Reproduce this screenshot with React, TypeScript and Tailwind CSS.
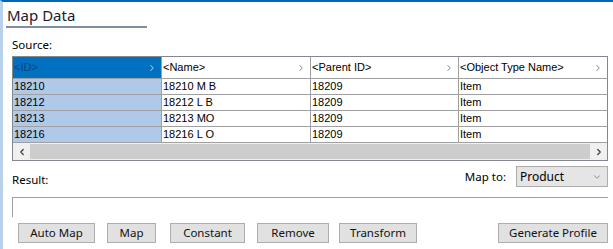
import { ChevronDown, ChevronLeft, ChevronRight } from "lucide-react";

const COLS = [
    { label: "<ID>", w: "w-[148px]" },
    { label: "<Name>", w: "w-[149px]" },
    { label: "<Parent ID>", w: "w-[148px]" },
    { label: "<Object Type Name>", w: "w-[149px]" },
];

const ROWS = [
    ["18210", "18210 M B", "18209", "Item"],
    ["18212", "18212 L B", "18209", "Item"],
    ["18213", "18213 MO", "18209", "Item"],
    ["18216", "18216 L O", "18209", "Item"],
];

const BUTTONS = [
    { label: "Auto Map", cls: "ml-[15px] w-[77px]" },
    { label: "Map", cls: "ml-[12px] w-[49px]" },
    { label: "Constant", cls: "ml-[14px] w-[75px]" },
    { label: "Remove", cls: "ml-[12px] w-[72px]" },
    { label: "Transform", cls: "ml-[10px] w-[78px]" },
];

function Btn({ label, className }: { label: string; className?: string }) {
    return (
        <button
            className={`h-[20px] border border-[#adadad] bg-[#e1e1e1] text-[11.5px] leading-none text-[#111] ${className ?? ""}`}
        >
            {label}
        </button>
    );
}

export default function App() {
    return (
        <div
            className="relative h-[249px] w-[613px] overflow-hidden border-t-2 border-l-[3px] border-t-[#0068b8] border-l-[#b9d1ea] bg-white text-black"
            style={{ fontFamily: '"Noto Sans", "Open Sans", sans-serif' }}
        >
            <div className="ml-[3px] flex h-[26px] w-[141px] items-end border-b-2 border-[#7f8ea3] pb-[3px] pl-[1px]">
                <span className="text-[15px] leading-none text-[#1a1a2e]">Map Data</span>
            </div>

            <div className="ml-[9px] mt-[10px] text-[11.5px] leading-[14px]">Source:</div>

            <div className="ml-[9px] mt-[4px] w-[596px] border border-[#828790]">
                <div
                    className="flex h-[22px]"
                    style={{ fontFamily: '"Liberation Sans", Arial, sans-serif' }}
                >
                    {COLS.map((c, i) => (
                        <div
                            key={c.label}
                            className={`${c.w} flex items-center justify-between border-b border-[#a0a0a0] pl-[1px] pr-[4px] text-[11px] ${
                                i === 0
                                    ? "bg-[#0070c0] text-[#17427a]"
                                    : "border-l border-[#a0a0a0] bg-white"
                            }`}
                        >
                            <span>{c.label}</span>
                            <ChevronRight
                                className={`h-[10px] w-[10px] ${i === 0 ? "text-[#a9bed6]" : "text-[#9a9a9a]"}`}
                                strokeWidth={2.5}
                            />
                        </div>
                    ))}
                </div>
                {ROWS.map((r, ri) => (
                    <div
                        key={ri}
                        className="flex h-[16px]"
                        style={{ fontFamily: '"Liberation Sans", Arial, sans-serif' }}
                    >
                        {r.map((v, i) => (
                            <div
                                key={i}
                                className={`${COLS[i].w} flex items-center border-b border-[#a0a0a0] pl-[1px] text-[11px] leading-none ${
                                    i === 0 ? "bg-[#b0c9e9]" : "border-l border-[#a0a0a0] bg-white"
                                }`}
                            >
                                {v}
                            </div>
                        ))}
                    </div>
                ))}
                <div className="flex h-[17px] bg-[#f0f0f0]">
                    <div className="flex w-[17px] items-center justify-center">
                        <ChevronLeft className="h-[10px] w-[10px] text-[#404040]" strokeWidth={3} />
                    </div>
                    <div className="my-[1px] flex-1 bg-[#cdcdcd]" />
                    <div className="flex w-[17px] items-center justify-center">
                        <ChevronRight className="h-[10px] w-[10px] text-[#404040]" strokeWidth={3} />
                    </div>
                </div>
            </div>

            <div className="mt-[5px] flex h-[21px] items-center">
                <span className="ml-[9px] mt-[6px] text-[11.5px]">Result:</span>
                <span className="ml-auto mr-[10px] text-[11.5px]">Map to:</span>
                <div className="mr-[5px] flex h-[21px] w-[92px] items-center justify-between border border-[#acacac] bg-[#e5e5e5] pl-[3px] pr-[5px] text-[12px]">
                    <span>Product</span>
                    <ChevronDown className="h-[10px] w-[10px] text-[#555]" strokeWidth={1.5} />
                </div>
            </div>

            <div className="ml-[9px] mt-[10px] h-[20px] w-[596px] border-l border-t border-[#a0a0a0]" />

            <div className="mt-[6px] flex items-center">
                {BUTTONS.map((b) => (
                    <Btn key={b.label} label={b.label} className={b.cls} />
                ))}
                <Btn label="Generate Profile" className="ml-auto mr-[5px] w-[110px]" />
            </div>
        </div>
    );
}
